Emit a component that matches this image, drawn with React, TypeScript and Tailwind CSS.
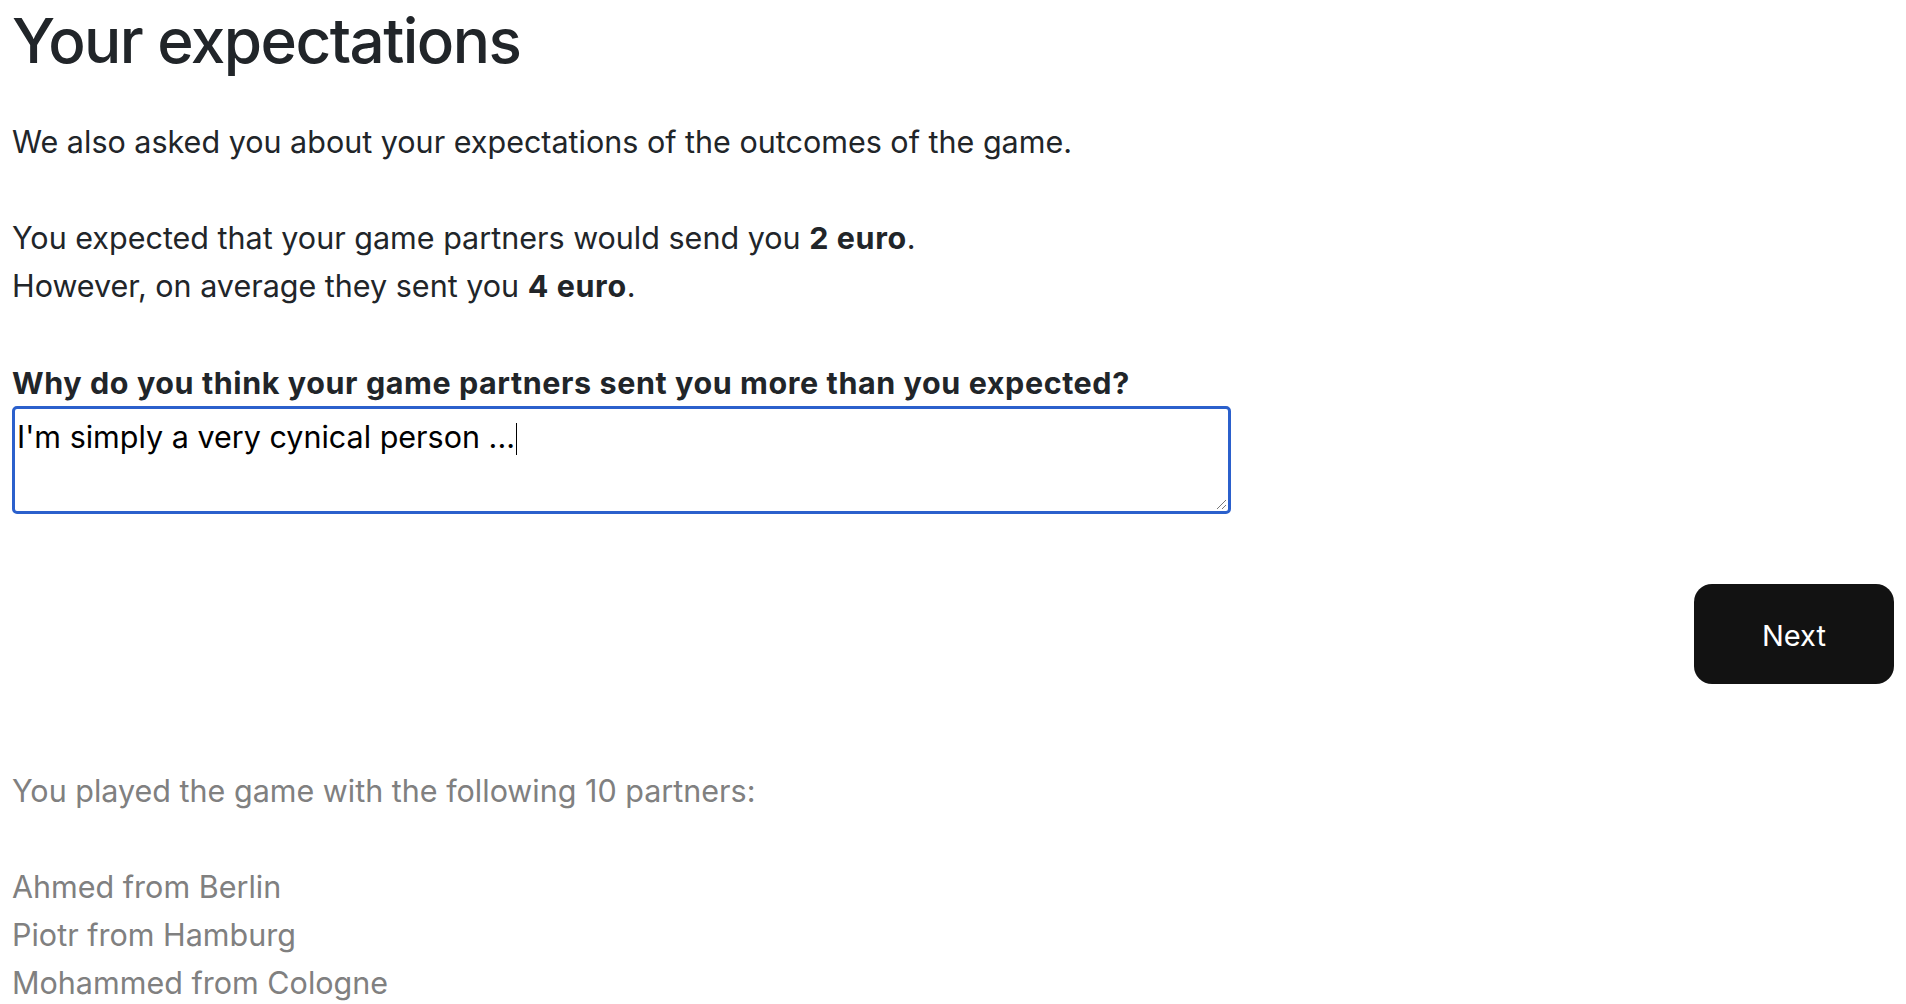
import React from "react";

const partners = ["Ahmed from Berlin", "Piotr from Hamburg", "Mohammed from Cologne"];

export default function App() {
  return (
    <div className="min-h-screen bg-white px-3 font-['Inter',sans-serif] text-[30.5px] leading-[48px] text-[#212529]">
      <h1 className="mt-1 mb-10 text-[62px] font-medium leading-[74px] tracking-[-0.025em]">
        Your expectations
      </h1>

      <p className="mb-12">We also asked you about your expectations of the outcomes of the game.</p>

      <p className="mb-12">
        You expected that your game partners would send you{" "}
        <b className="font-bold tracking-[0.02em]">2 euro</b>.
        <br />
        However, on average they sent you <b className="font-bold tracking-[0.02em]">4 euro</b>.
      </p>

      <label className="block pt-[1px] font-bold tracking-[0.019em]">
        Why do you think your game partners sent you more than you expected?
      </label>
      <div className="relative -mt-[1px] h-[108px] w-[1219px] rounded-[5px] border-[3px] border-[#2b60cc] px-[2px] pt-[6px] leading-[44px] text-black">
        <span>I'm simply a very cynical person ...</span>
        <span className="ml-px inline-block h-[32px] w-px translate-y-[7px] bg-black" />
        <svg
          className="absolute right-[1px] bottom-[1px]"
          width="12"
          height="12"
          viewBox="0 0 12 12"
          aria-hidden
        >
          <line x1="11" y1="2" x2="2" y2="11" stroke="#777" strokeWidth="1" />
          <line x1="11" y1="7" x2="7" y2="11" stroke="#777" strokeWidth="1" />
        </svg>
      </div>

      <div className="mt-[70px] flex justify-end">
        <button
          type="button"
          className="h-[100px] w-[200px] rounded-[18px] bg-[#121212] pt-[4px] text-[29px] text-white"
        >
          Next
        </button>
      </div>

      <div className="mt-[83px] text-[#808080]">
        <p className="mb-12">You played the game with the following 10 partners:</p>
        {partners.map((p) => (
          <div key={p}>{p}</div>
        ))}
      </div>
    </div>
  );
}
